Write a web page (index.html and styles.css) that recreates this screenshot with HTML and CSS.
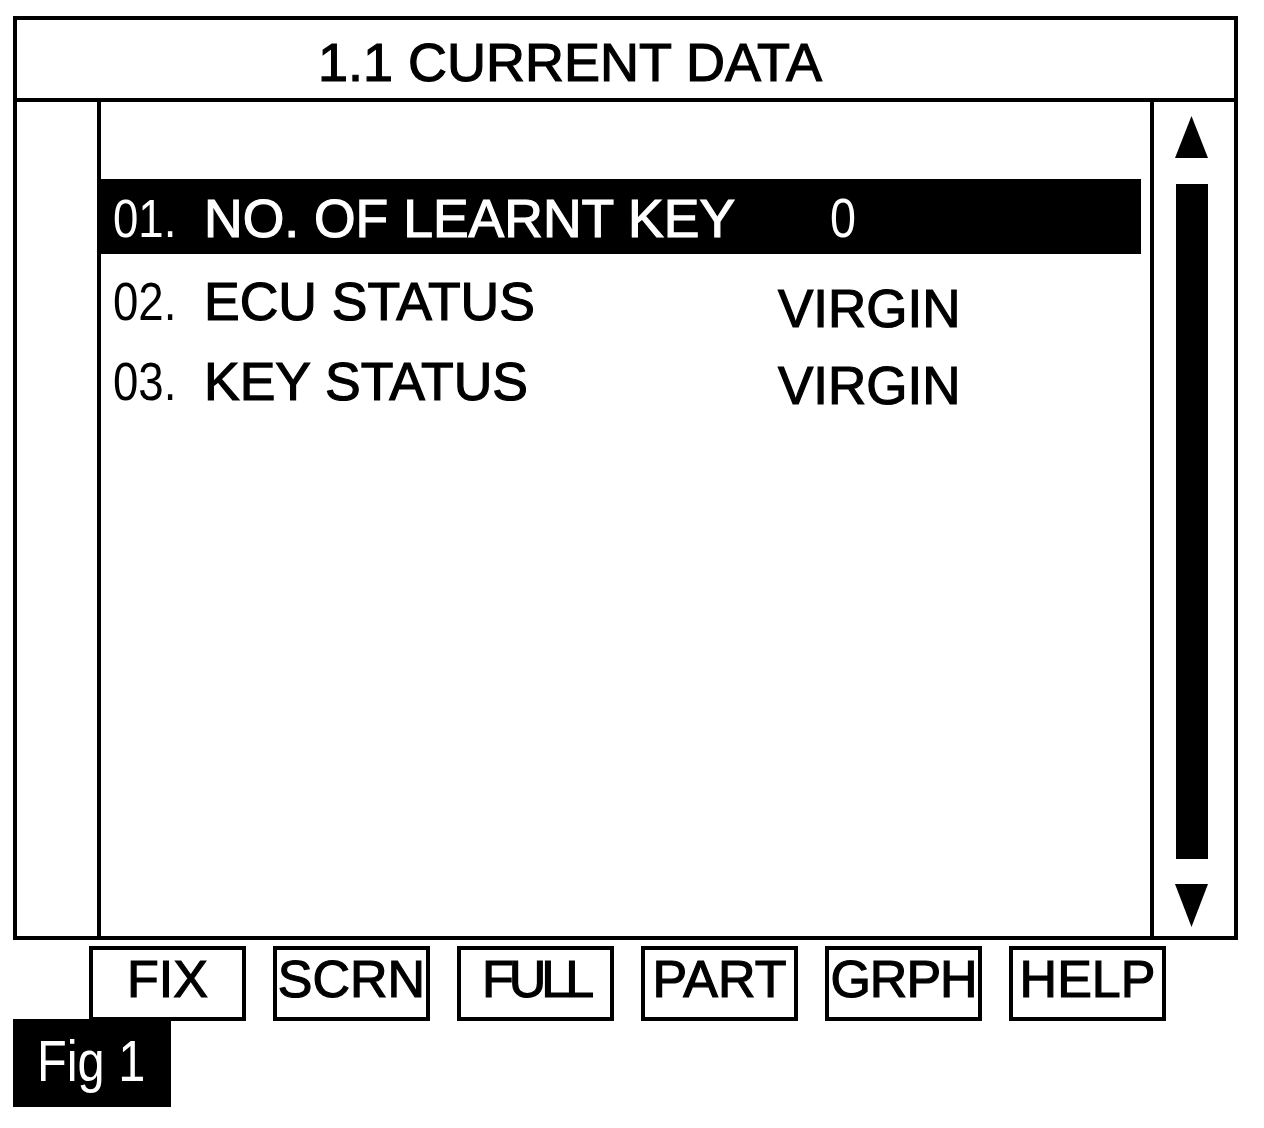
FILE: index.html
```html
<!DOCTYPE html>
<html lang="en">
<head>
<meta charset="utf-8">
<title>1.1 CURRENT DATA</title>
<link rel="stylesheet" href="styles.css">
</head>
<body>
<div class="page">
  <div class="frame">
    <div class="header">1.1 CURRENT DATA</div>
    <div class="body">
      <div class="sidebar"></div>
      <div class="main">
        <div class="row row-1 selected">
          <span class="num">01.</span>
          <span class="label">NO. OF LEARNT KEY</span>
          <span class="val val-num">0</span>
        </div>
        <div class="row row-2">
          <span class="num">02.</span>
          <span class="label">ECU STATUS</span>
          <span class="val">VIRGIN</span>
        </div>
        <div class="row row-3">
          <span class="num">03.</span>
          <span class="label">KEY STATUS</span>
          <span class="val">VIRGIN</span>
        </div>
      </div>
      <div class="scroll">
        <svg class="arrow" width="33" height="42" viewBox="0 0 33 42"><polygon points="16.5,0 33,42 0,42" fill="#000"/></svg>
        <div class="thumb"></div>
        <svg class="arrow arrow-down" width="33" height="43" viewBox="0 0 33 43"><polygon points="0,0 33,0 16.5,43" fill="#000"/></svg>
      </div>
    </div>
  </div>
  <div class="buttons">
    <div class="btn">FIX</div>
    <div class="btn">SCRN</div>
    <div class="btn btn-tight">FULL</div>
    <div class="btn">PART</div>
    <div class="btn btn-snug">GRPH</div>
    <div class="btn">HELP</div>
  </div>
  <div class="fig"><span class="fig-text">Fig 1</span></div>
</div>
</body>
</html>
```
FILE: styles.css
```css
html, body {
  margin: 0;
  padding: 0;
  background: #fff;
}

body {
  font-family: "Liberation Sans", Arial, sans-serif;
  color: #000;
}

.page {
  padding: 16px 0 0 13px;
}

.frame {
  width: 1225px;
  box-sizing: border-box;
  border: 4px solid #000;
}

.header {
  box-sizing: border-box;
  border-bottom: 4px solid #000;
  height: 82px;
  padding: 12px 0 0 301px;
  font-size: 54px;
  line-height: 60px;
  white-space: nowrap;
  -webkit-text-stroke: 1.2px #000;
}

.body {
  display: flex;
  height: 834px;
}

.sidebar {
  width: 80px;
  border-right: 4px solid #000;
  flex: none;
}

.main {
  flex: 1;
  min-width: 0;
  padding-top: 77px;
}

.row {
  display: flex;
  align-items: flex-start;
  padding-left: 12px;
  font-size: 53px;
  white-space: nowrap;
}

.row-1 {
  height: 75px;
  line-height: 79px;
  margin-right: 9px;
  overflow: hidden;
}

.row-2 {
  margin-top: 8px;
  height: 80px;
  line-height: 80px;
}

.row-3 {
  height: 80px;
  line-height: 80px;
}

.selected {
  background: #000;
  color: #fff;
}

.num {
  width: 91px;
  flex: none;
  transform: scaleX(0.86);
  transform-origin: 0 50%;
}

.label {
  width: 574px;
  flex: none;
  font-size: 53.5px;
  -webkit-text-stroke: 1.2px currentColor;
}

.val {
  -webkit-text-stroke: 1.2px currentColor;
}

.val-num {
  margin-left: 52px;
  font-size: 55px;
  transform: scaleX(0.85);
  transform-origin: 0 50%;
  -webkit-text-stroke: 0;
}

.row-2 .val {
  padding-top: 7px;
}

.row-3 .val {
  padding-top: 4px;
}

.scroll {
  width: 84px;
  flex: none;
  box-sizing: border-box;
  border-left: 4px solid #000;
  display: flex;
  flex-direction: column;
  align-items: flex-start;
  padding: 14px 0 0 21px;
}

.arrow {
  display: block;
}

.thumb {
  width: 32px;
  height: 675px;
  margin: 26px 0 0 1px;
  background: #000;
}

.arrow-down {
  margin-top: 25px;
}

.buttons {
  display: flex;
  gap: 27px;
  margin: 6px 0 0 76px;
}

.btn {
  width: 157px;
  height: 75px;
  box-sizing: border-box;
  border: 4px solid #000;
  text-align: center;
  font-size: 52px;
  line-height: 58px;
  white-space: nowrap;
  -webkit-text-stroke: 1.2px #000;
}

.btn-tight {
  letter-spacing: -5px;
}

.btn-snug {
  letter-spacing: -1px;
}

.fig {
  margin-top: -2px;
  width: 158px;
  height: 88px;
  box-sizing: border-box;
  padding-left: 24px;
  background: #000;
  color: #fff;
  font-size: 58px;
  line-height: 84px;
  white-space: nowrap;
}

.fig-text {
  display: inline-block;
  transform: scaleX(0.84);
  transform-origin: 0 50%;
}
```
